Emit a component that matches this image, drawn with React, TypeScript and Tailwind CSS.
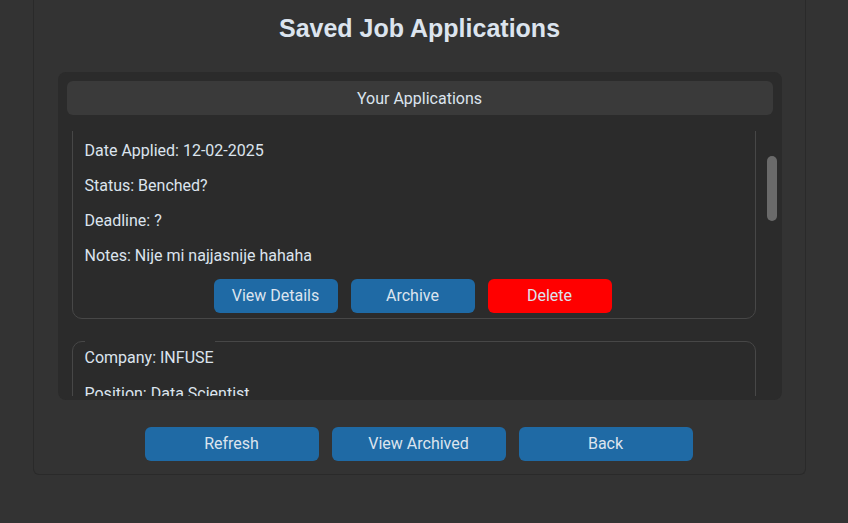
const apps = [
  {
    company: "AVL",
    position: "Software Engineer",
    date: "12-02-2025",
    status: "Benched?",
    deadline: "?",
    notes: "Nije mi najjasnije hahaha",
  },
  {
    company: "INFUSE",
    position: "Data Scientist",
    date: "05-02-2025",
    status: "Applied",
    deadline: "01-03-2025",
    notes: "-",
  },
];

const AppCard = ({ app }: { app: (typeof apps)[number] }) => {
  return (
    <div className="w-[684px] h-[256px] shrink-0 border border-[#474747] rounded-[10px] pl-[12px] flex flex-col">
      <div className="-mt-px h-[35px] w-fit pr-px pb-px flex items-center bg-[#2b2b2b]">
        Company: {app.company}
      </div>
      <div className="h-[35px] flex items-center">Position: {app.position}</div>
      <div className="h-[35px] flex items-center">Date Applied: {app.date}</div>
      <div className="h-[35px] flex items-center">Status: {app.status}</div>
      <div className="h-[35px] flex items-center">Deadline: {app.deadline}</div>
      <div className="h-[35px] flex items-center">Notes: {app.notes}</div>
      <div className="mt-[6px] -ml-[12px] flex justify-center gap-[13px] pr-[2px]">
        <button className="w-[124px] h-[34px] rounded-[6px] bg-[#1f6aa5]">View Details</button>
        <button className="w-[124px] h-[34px] rounded-[6px] bg-[#1f6aa5]">Archive</button>
        <button className="w-[124px] h-[34px] rounded-[6px] bg-[#ff0000]">Delete</button>
      </div>
    </div>
  );
};

const App = () => {
  return (
    <div
      className="w-[848px] h-[523px] bg-[#333333] text-[#dce4ee] text-[16px] overflow-hidden"
      style={{ fontFamily: "Roboto, 'Liberation Sans', sans-serif" }}
    >
      <div className="ml-[33px] w-[773px] h-[475px] border-x border-b border-[#2a2a2a] rounded-b-[6px] flex flex-col items-center">
        <h1
          className="mt-[12px] text-[25px] leading-[32px] font-bold text-[#dce4ee]"
          style={{ fontFamily: "'Liberation Sans', Arial, sans-serif" }}
        >
          Saved Job Applications
        </h1>

        <div className="mt-[28px] w-[724px] h-[328px] bg-[#2b2b2b] rounded-[8px] flex flex-col">
          <div className="mx-[9px] mt-[9px] h-[34px] pt-px rounded-[6px] bg-[#3a3a3a] flex items-center justify-center">
            Your Applications
          </div>
          <div className="mt-[16px] h-[265px] flex">
            <div className="ml-[14px] w-[684px] overflow-hidden">
              <div className="-mt-[68px] flex flex-col gap-[22px]">
                {apps.map((app) => (
                  <AppCard key={app.company} app={app} />
                ))}
              </div>
            </div>
            <div className="ml-[11px] w-[10px] pt-[25px]">
              <div className="w-[10px] h-[65px] rounded-full bg-[#6a6a6a]" />
            </div>
          </div>
        </div>

        <div className="mt-[27px] flex gap-[13px] pr-[2px]">
          <button className="w-[174px] h-[34px] rounded-[6px] bg-[#1f6aa5]">Refresh</button>
          <button className="w-[174px] h-[34px] rounded-[6px] bg-[#1f6aa5]">View Archived</button>
          <button className="w-[174px] h-[34px] rounded-[6px] bg-[#1f6aa5]">Back</button>
        </div>
      </div>
    </div>
  );
};

export default App;
